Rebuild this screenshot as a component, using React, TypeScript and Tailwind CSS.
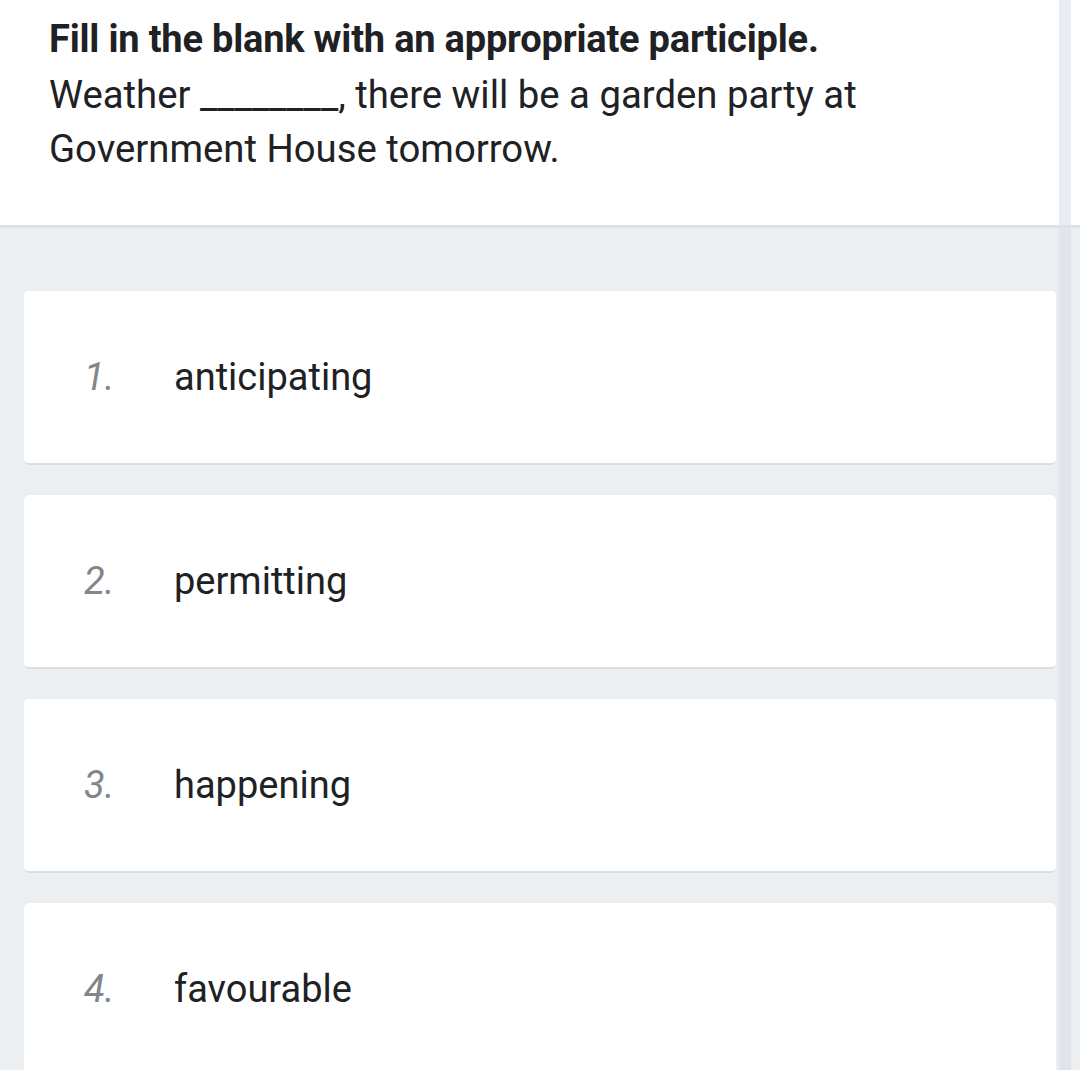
const options = ["anticipating", "permitting", "happening", "favourable"];

const OptionCard = ({ index, label }: { index: number; label: string }) => {
	return (
		<div className="flex h-[174px] items-center rounded-[5px] border-b-2 border-[#d9dee3] bg-white pl-[60px]">
			<span className="w-[90px] text-[38px] italic text-[#80868b]">{index}.</span>
			<span className="text-[38px] text-[#202124]">{label}</span>
		</div>
	);
};

export default function App() {
	return (
		<div className="min-h-[1070px] w-[1080px] overflow-hidden bg-[#ebeff2] font-['Roboto',sans-serif]">
			<header className="flex h-[228px] border-b-[3px] border-[#dde2e8] bg-white">
				<div className="flex-1 pl-[49px] pt-[12px]">
					<h1 className="text-[38px] font-bold leading-[54px] tracking-[-0.2px] text-[#202124]">
						Fill in the blank with an appropriate participle.
					</h1>
					<p className="mt-[2px] text-[38.3px] leading-[54px] text-[#202124]">
						Weather ________, there will be a garden party at
						<br />
						Government House tomorrow.
					</p>
				</div>
				<div className="mr-[9px] w-[12px] bg-[#e8edf3]" />
			</header>

			<section className="flex">
				<div className="flex flex-1 flex-col gap-[30px] pl-[24px] pr-[3px] pt-[63px]">
					{options.map((o, i) => (
						<OptionCard key={o} index={i + 1} label={o} />
					))}
				</div>
				<div className="mr-[9px] min-h-[842px] w-[12px] bg-[#e0e5ec]" />
			</section>
		</div>
	);
}
